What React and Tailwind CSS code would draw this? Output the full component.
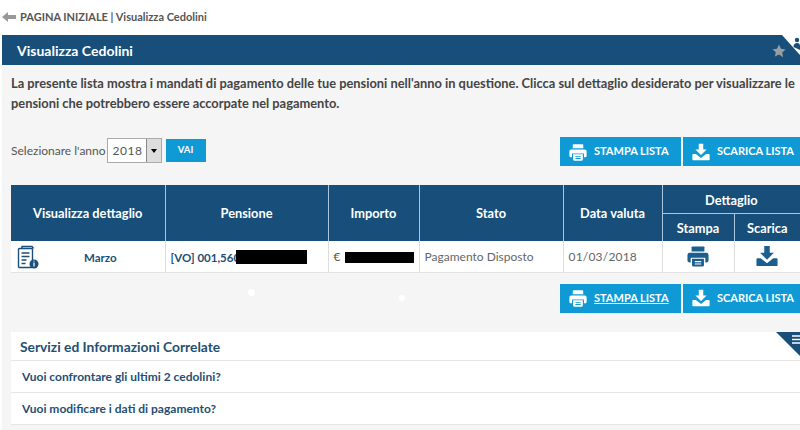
import React from 'react';

const PrinterIcon = ({ className }) => (
  <svg viewBox="0 0 24 24" className={className} fill="currentColor">
    <path d="M6 1.500h12a1 1 0 0 1 1 1V7H5V2.500a1 1 0 0 1 1-1z" />
    <path fillRule="evenodd" d="M3 8.500h18a2.500 2.500 0 0 1 2.500 2.500v6a2 2 0 0 1-2 2H20v-5H4v5H2.500a2 2 0 0 1-2-2v-6A2.500 2.500 0 0 1 3 8.500z" />
    <path fillRule="evenodd" d="M5.500 15h13v7a1.500 1.500 0 0 1-1.500 1.500H7A1.500 1.500 0 0 1 5.500 22v-7zm3 2.500v1.200h7v-1.200h-7zm0 2.600v1.200h7v-1.200h-7z" />
  </svg>
);

const DownloadIcon = ({ className }) => (
  <svg viewBox="0 0 24 24" className={className} fill="currentColor">
    <path d="M9 1h6v7.500h4.500L12 16 4.500 8.500H9V1z" />
    <path d="M1.500 14.500h3.700L12 20l6.800-5.500h3.700a1 1 0 0 1 1 1V22a1 1 0 0 1-1 1h-21a1 1 0 0 1-1-1v-6.500a1 1 0 0 1 1-1z" />
  </svg>
);

const DocInfoIcon = () => (
  <svg viewBox="0 0 22 24" className="h-6 w-[22px] text-[#1b4f78]" fill="none" stroke="currentColor" strokeWidth="1.400">
    <path d="M5 3.500V1.500h10l1.500 2" />
    <rect x="1.500" y="3.500" width="14" height="19" rx="1" />
    <path d="M4.500 8h8M4.500 11.500h8M4.500 15h5M4.500 18.500h4" strokeWidth="1.600" />
    <circle cx="17" cy="19" r="4.500" fill="currentColor" stroke="none" />
    <path d="M17 17.500v4M17 15.800v.8" stroke="#fff" strokeWidth="1.200" />
  </svg>
);

const ActionButton = ({ icon, label, underline, width }) => (
  <a className={`flex h-[29px] items-center gap-[7px] bg-[#0f9ad6] pl-[9px] text-[11px] font-bold text-white ${width} ${underline ? 'underline' : ''}`}>
    {icon}
    <span>{label}</span>
  </a>
);

const ActionBar = ({ underline }) => (
  <div className="flex justify-end gap-[2px]">
    <ActionButton width="w-[121px]" underline={underline} label="STAMPA LISTA" icon={<PrinterIcon className="h-[18px] w-[18px]" />} />
    <ActionButton width="w-[117px]" label="SCARICA LISTA" icon={<DownloadIcon className="h-[18px] w-[18px]" />} />
  </div>
);

export default function App() {
  return (
    <div className="h-[430px] w-[800px] overflow-hidden bg-white pl-[2px] font-['Lato','Open_Sans',sans-serif] text-[#444]">
      {/* Breadcrumb */}
      <div className="flex h-[35px] items-center gap-[4px] pb-[1px] text-[11px] font-bold text-[#555]">
        <svg viewBox="0 0 14 10" className="h-[10px] w-[14px] text-[#999]" fill="currentColor">
          <path d="M0 5l6-5v3h8v4H6v3z" />
        </svg>
        <span>PAGINA INIZIALE | Visualizza Cedolini</span>
      </div>

      {/* Title bar */}
      <div className="relative flex h-[30px] items-center bg-[#174f7a] pl-[15px] text-[14px] font-bold text-white">
        Visualizza Cedolini
        <svg viewBox="0 0 24 24" className="absolute right-[14px] top-[9px] h-[14px] w-[14px] text-[#9a9ea3]" fill="currentColor">
          <path d="M12 1l3.400 7.300 7.900 1-5.800 5.400 1.500 7.900L12 17.800l-7 3.800 1.500-7.900L.7 9.300l7.900-1z" />
        </svg>
        <svg viewBox="0 0 18 20" className="absolute right-0 top-0 h-[20px] w-[18px]">
          <path d="M0 0h18v20z" fill="#fff" />
          <circle cx="15" cy="5" r="2.200" fill="#174f7a" />
          <path d="M11.500 12c0-3 1.500-4 3.500-4s3 1 3 3v4z" fill="#174f7a" />
        </svg>
      </div>

      {/* Content */}
      <div className="h-[365px] bg-[#f5f5f5] pl-[9px] pt-[8px]">
        <p className="whitespace-nowrap text-[12.850px] font-bold leading-[20px] text-[#444]">
          La presente lista mostra i mandati di pagamento delle tue pensioni nell'anno in questione. Clicca sul dettaglio desiderato per visualizzare le
          <br />
          pensioni che potrebbero essere accorpate nel pagamento.
        </p>

        <div className="mt-[24px] flex h-[29px] items-start justify-between">
          <div className="flex items-center pt-[1px]">
            <span className="text-[12px] text-[#555]">Selezionare l'anno</span>
            <div className="ml-[1px] flex h-[25px] w-[55px] items-center justify-between border border-[#aaa] bg-white pl-[5px] text-[12px] tracking-[0.5px] text-[#555]">
              2018
              <span className="flex h-[23px] w-[15px] items-center justify-center border-l border-[#888] bg-[#ddd]">
                <span className="border-x-[3.500px] border-t-[4px] border-x-transparent border-t-black" />
              </span>
            </div>
            <button className="ml-[4px] h-[23px] w-[40px] bg-[#0f9ad6] text-[9.500px] font-bold text-white">VAI</button>
          </div>
          <ActionBar />
        </div>

        {/* Table */}
        <table className="mt-[19px] w-[789px] table-fixed border-collapse text-center">
          <colgroup>
            <col className="w-[154px]" />
            <col className="w-[163px]" />
            <col className="w-[91px]" />
            <col className="w-[144px]" />
            <col className="w-[99px]" />
            <col className="w-[72px]" />
            <col className="w-[66px]" />
          </colgroup>
          <thead className="bg-[#174f7a] text-[12.800px] font-bold text-white">
            <tr className="h-[28px]">
              <th rowSpan={2} className="border-r border-[#a9c6da] pt-[1px]">Visualizza dettaglio</th>
              <th rowSpan={2} className="border-r border-[#a9c6da] pt-[1px]">Pensione</th>
              <th rowSpan={2} className="border-r border-[#a9c6da] pt-[1px]">Importo</th>
              <th rowSpan={2} className="border-r border-[#a9c6da] pt-[1px]">Stato</th>
              <th rowSpan={2} className="border-r border-[#a9c6da] pt-[1px]">Data valuta</th>
              <th colSpan={2} className="border-b border-[#a9c6da] pt-[3px]">Dettaglio</th>
            </tr>
            <tr className="h-[28px]">
              <th className="border-r border-[#a9c6da] pt-[3px]">Stampa</th>
              <th className="pt-[3px]">Scarica</th>
            </tr>
          </thead>
          <tbody className="bg-white text-[12px]">
            <tr className="h-[31px] border-b border-[#e2e2e2]">
              <td className="border-r border-[#ddd]">
                <div className="flex items-center pl-[6px] pt-[1px]">
                  <DocInfoIcon />
                  <span className="ml-[45px] pt-[2px] text-[11.500px] font-bold text-[#1b4f78]">Marzo</span>
                </div>
              </td>
              <td className="border-r border-[#ddd] text-left">
                <div className="flex items-center pl-[5px] pt-[2px] text-[11.500px] font-bold text-[#1b4f78]">
                  [VO] 001,560
                  <span className="ml-[-4px] h-[14px] w-[71px] bg-black" />
                </div>
              </td>
              <td className="border-r border-[#ddd] text-left">
                <div className="flex items-center pl-[5px] pt-[2px] text-[#555]">
                  €
                  <span className="ml-[5px] h-[11px] w-[69px] bg-black" />
                </div>
              </td>
              <td className="whitespace-nowrap border-r border-[#ddd] pl-[5px] pt-[2px] text-left text-[#666]">Pagamento Disposto</td>
              <td className="border-r border-[#ddd] pl-[5px] pt-[2px] text-left tracking-[0.2px] text-[#666]">01/03/2018</td>
              <td className="border-r border-[#ddd]">
                <PrinterIcon className="mx-auto h-[22px] w-[22px] text-[#1b5f8f]" />
              </td>
              <td>
                <DownloadIcon className="mx-auto h-[22px] w-[22px] text-[#1b5f8f]" />
              </td>
            </tr>
          </tbody>
        </table>

        <div className="relative mt-[11px]">
          <ActionBar underline />
          <span className="absolute left-[237px] top-[5px] h-[7px] w-[7px] rounded-full bg-white" />
          <span className="absolute left-[388px] top-[11px] h-[6px] w-[6px] rounded-full bg-white" />
        </div>

        {/* Related services */}
        <div className="relative mt-[19px] w-[789px] bg-white text-[#1f4f73]">
          <div className="flex h-[29px] items-center border-b border-[#e6e6e6] pl-[9px] pt-[4px] text-[13.800px] font-bold">
            Servizi ed Informazioni Correlate
          </div>
          <div className="flex h-[32px] items-center border-b border-[#e6e6e6] pl-[11px] pt-[2px] text-[12px] font-bold">
            Vuoi confrontare gli ultimi 2 cedolini?
          </div>
          <div className="flex h-[32px] items-center border-b border-[#e6e6e6] pl-[11px] pt-[2px] text-[12px] font-bold">
            Vuoi modificare i dati di pagamento?
          </div>
          <svg viewBox="0 0 24 24" className="absolute right-0 top-0 h-[24px] w-[24px]">
            <path d="M0 0h24v24z" fill="#174f7a" />
            <path d="M16 4h8M16 7.500h8M16 11h8" stroke="#fff" strokeWidth="1.500" />
          </svg>
        </div>
      </div>
    </div>
  );
}
